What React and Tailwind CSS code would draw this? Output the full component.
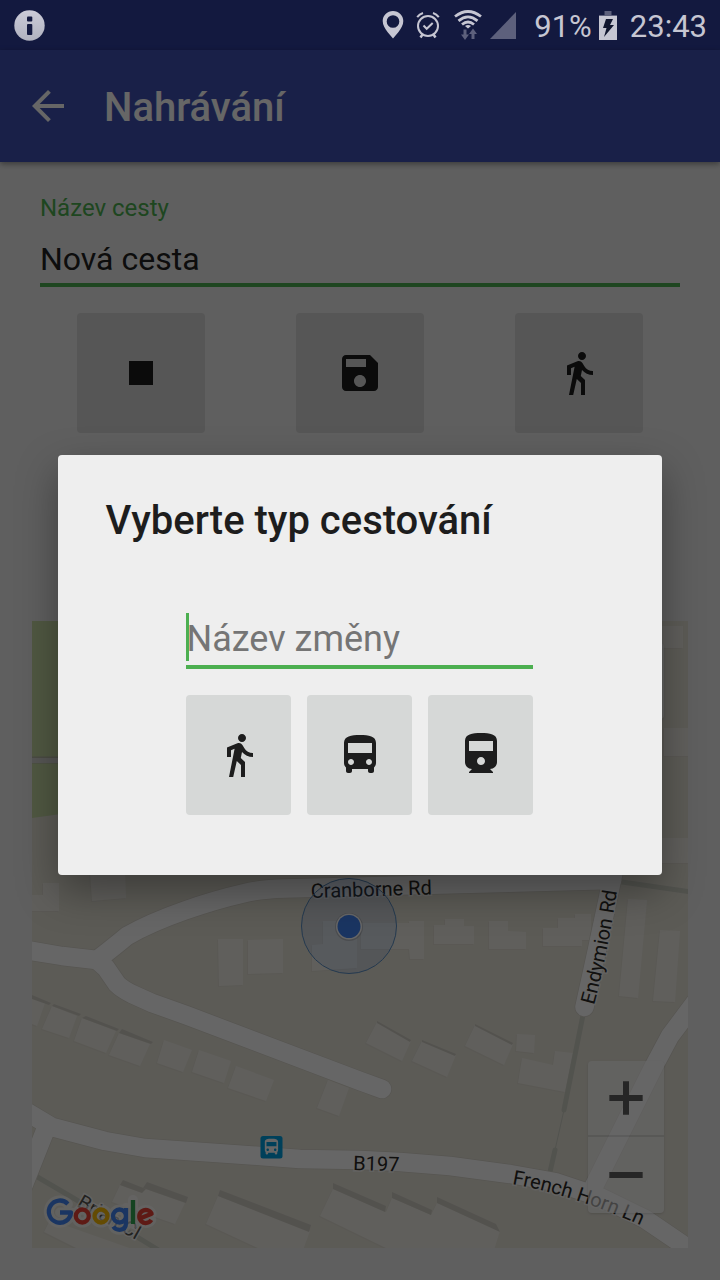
import React from "react";

const ICONS = {
  stop: "M6 6h12v12H6z",
  save: "M17 3H5c-1.11 0-2 .9-2 2v14c0 1.1.89 2 2 2h14c1.1 0 2-.9 2-2V7l-4-4zm-5 16c-1.66 0-3-1.34-3-3s1.34-3 3-3 3 1.34 3 3-1.34 3-3 3zm3-10H5V5h10v4z",
  walk: "M13.5 5.5c1.1 0 2-.9 2-2s-.9-2-2-2-2 .9-2 2 .9 2 2 2zM9.8 8.9L7 23h2.1l1.8-8 2.1 2v6h2v-7.5l-2.1-2 .6-3C14.8 12 16.8 13 19 13v-2c-1.9 0-3.5-1-4.3-2.4l-1-1.6c-.4-.6-1-1-1.7-1-.3 0-.5.1-.8.1L6 8.3V13h2V9.6l1.8-.7",
  bus: "M4 16c0 .88.39 1.67 1 2.22V20c0 .55.45 1 1 1h1c.55 0 1-.45 1-1v-1h8v1c0 .55.45 1 1 1h1c.55 0 1-.45 1-1v-1.78c.61-.55 1-1.34 1-2.22V6c0-3.5-3.58-4-8-4s-8 .5-8 4v10zm3.5 1c-.83 0-1.5-.67-1.5-1.5S6.67 14 7.5 14s1.5.67 1.5 1.5S8.33 17 7.5 17zm9 0c-.83 0-1.5-.67-1.5-1.5s.67-1.5 1.5-1.5 1.5.67 1.5 1.5-.67 1.5-1.5 1.5zm1.5-6H6V6h12v5z",
  train: "M4 15.5C4 17.43 5.57 19 7.5 19L6 20.5v.5h12v-.5L16.5 19c1.93 0 3.5-1.57 3.5-3.5V5c0-3.5-3.58-4-8-4s-8 .5-8 4v10.5zm8 1.5c-1.1 0-2-.9-2-2s.9-2 2-2 2 .9 2 2-.9 2-2 2zm6-7H6V5h12v5z",
  back: "M20 11H7.83l5.59-5.59L12 4l-8 8 8 8 1.41-1.41L7.83 13H20v-2z",
  plus: "M10.2 2h3.6v8.2H22v3.6h-8.200V22h-3.600v-8.200H2v-3.600h8.200z",
  minus: "M2 10.200h20v3.600H2z",
  locate: "M12 8a4 4 0 100 8 4 4 0 000-8zm9 3a9 9 0 00-8-8V1h-2v2a9 9 0 00-8 8H1v2h2a9 9 0 008 8v2h2v-2a9 9 0 008-8h2v-2h-2z",
};

function Icon({ name, className }) {
  return (
    <svg viewBox="0 0 24 24" className={className} fill="currentColor" aria-hidden="true">
      <path d={ICONS[name]} />
    </svg>
  );
}

function StatusBar() {
  return (
    <div className="relative z-20 flex h-[50px] items-center justify-between pl-[14px] pr-[13px] text-[#c6c6d2]">
      <svg viewBox="0 0 31 31" className="h-[31px] w-[31px]" aria-hidden="true">
        <defs>
          <linearGradient id="info" x1="0" y1="0" x2="0" y2="1">
            <stop offset="0" stopColor="#cbcbd8" />
            <stop offset="1" stopColor="#b0b2bf" />
          </linearGradient>
        </defs>
        <circle cx="15.500" cy="15.500" r="15.200" fill="url(#info)" />
        <rect x="13" y="6.500" width="5.300" height="5" rx="1" fill="#131940" />
        <rect x="13" y="14" width="5.300" height="11" rx="1" fill="#131940" />
      </svg>
      <div className="flex items-center">
        <svg viewBox="0 0 22 28" className="h-7 w-[22px]" fill="currentColor" aria-hidden="true">
          <path
            fillRule="evenodd"
            d="M11 0C5.200 0 .700 4.500 .700 10c0 4 2.300 7.500 5 11.200L11 27.500l5.300-6.300c2.700-3.700 5-7.200 5-11.200C21.300 4.500 16.800 0 11 0zm0 4.200a6.300 6.300 0 110 12.600 6.300 6.300 0 010-12.600z"
          />
        </svg>
        <svg viewBox="0 0 24 28" className="ml-3 h-7 w-6" fill="none" stroke="currentColor" strokeWidth="2" aria-hidden="true">
          <circle cx="12" cy="15" r="10" />
          <path d="M7.500 14.500l3.200 3.300 6-5.800" />
          <path d="M1.200 6.200Q3.500 3 7 2M22.800 6.200Q20.500 3 17 2" />
          <path d="M6.500 23.500l-2 3M17.500 23.500l2 3" strokeWidth="2.500" />
        </svg>
        <svg viewBox="0 0 28 30" className="ml-[14px] h-[30px] w-7" fill="none" stroke="currentColor" strokeWidth="2.800" aria-hidden="true">
          <path d="M1 6.500Q14-3.500 27 6.500" />
          <path d="M4.500 10.800Q14 3 23.500 10.800" />
          <path d="M8 14.500Q14 9.500 20 14.500" />
          <path d="M14 18.500l-3-2.500q3-2 6 0z" fill="currentColor" stroke="none" />
          <path d="M9.500 19.500h3v5h2.500L11 30l-4-5.500h2.500zM17.500 29h3v-5H23l-4-5.500-4 5.500h2.500z" fill="#5d607c" stroke="none" />
        </svg>
        <svg viewBox="0 0 26 27" className="ml-2 h-[27px] w-[26px]" fill="#5d607c" aria-hidden="true">
          <path d="M26 0v27H0z" />
        </svg>
        <span className="ml-[18px] pt-[3px] text-[31px] leading-[47px]">91%</span>
        <svg viewBox="0 0 18 29" className="ml-[7px] h-[29px] w-[18px]" aria-hidden="true">
          <path d="M5.500 0h7v4H18v2H0V4h5.500z" fill="#5d607c" />
          <path d="M0 5h18v24H0z" fill="#c6c6d2" />
          <path d="M7 8h7l-3 6h4L5 26l2.500-9H4z" fill="#11162f" />
        </svg>
        <span className="ml-[13px] pt-[3px] text-[31px] leading-[47px]">23:43</span>
      </div>
    </div>
  );
}

const BUILDINGS = [
  "660,626 683,626 683,648 660,648",
  "664,728 690,728 690,756 664,756",
  "660,838 690,838 690,863 660,863",
  "43,883 59,883 59,911 32,911 32,895 43,895",
  "90,872 125,872 126,898 92,901",
  "218,939 243,939 243,985 219,986",
  "248,940 283,939 283,973 248,974",
  "323,921 357,921 357,968 312,971 312,945 323,944",
  "361,923 409,923 409,921 424,921 424,959 410,959 409,949 361,949",
  "434,925 445,925 445,919 464,919 464,926 474,926 474,944 434,944",
  "489,921 508,921 508,931 526,932 526,949 489,949",
  "543,928 558,928 558,918 575,918 575,914 591,914 591,940 582,940 582,946 543,946",
  "628,899 647,900 638,998 619,996",
  "660,930 680,931 675,1002 653,1001",
  "517,1034 535,1035 534,1053 516,1051",
  "522,1058 553,1065 555,1051 573,1053 565,1092 518,1083",
  "475,1025 513,1044 504,1065 465,1046",
  "377,1022 411,1041 402,1061 366,1043",
  "422,1041 456,1055 447,1077 412,1061",
  "32,998 45,1003 37,1026 32,1024",
  "52,1006 77,1016 69,1038 42,1029",
  "82,1018 116,1031 106,1053 74,1041",
  "119,1033 150,1044 140,1066 109,1055",
  "164,1040 192,1050 183,1072 157,1063",
  "199,1050 231,1061 224,1083 192,1072",
  "236,1066 274,1080 266,1101 228,1088",
  "328,1080 349,1088 339,1116 317,1108",
  "120,1185 142,1193 143,1188 185,1203 175,1224 112,1202",
  "218,1196 310,1231 303,1250 262,1250 206,1224",
  "50,1220 135,1250 80,1250 44,1232",
  "333,1189 386,1212 392,1198 431,1215 437,1203 500,1231 494,1250 390,1250 320,1216",
];

const ROOF_SHADES = [
  "32,995 51,1003 49,1005 32,999",
  "54,1004 81,1014 79,1016 52,1006",
  "86,1016 119,1029 117,1031 82,1018",
  "122,1029 153,1042 151,1044 119,1033",
  "377,1021 411,1040 410,1042 377,1023",
  "422,1040 456,1054 455,1056 422,1042",
  "475,1024 513,1043 512,1045 475,1026",
  "123,1180 146,1189 142,1193 120,1185",
  "147,1182 188,1197 186,1203 143,1188",
  "220,1190 311,1225 309,1232 218,1196",
  "333,1183 386,1206 385,1212 333,1189",
  "392,1192 432,1210 431,1215 392,1198",
  "437,1197 496,1224 500,1232 437,1203",
];

const ROADS = [
  "M20 949L62 956 97 960Q115 946 127 936C160 917 210 901 245 893Q262 889 285 888.500L500 883 612 880",
  "M97 960L106 968 117 984Q122 989 132 994L152 1003 187 1015.500 360 1081 382 1089",
  "M20 1108L52 1127 105 1141 145 1148 260 1156 300 1159 360 1160 400 1162 450 1166 510 1174 555 1182 600 1197 645 1219 695 1253",
  "M45 1131L22 1189",
  "M594 1186L654 1066 670 1036 700 996",
  "M584.500 1007L597 950 614 870",
];

const FOOTPATHS = [
  "M583 1015L564 1110",
  "M555 1150L550 1172",
  "M622 882L692 892",
  "M34 1175L75 1199 160 1251",
];

const MARK_STROKES = [
  ["#4285f4", "M67.900 1203.900A11.100 11.100 0 1 0 71 1212.500H60"],
  ["#ea4335", "M88.800 1216A6.500 6.500 0 1 1 75.800 1216A6.500 6.500 0 1 1 88.800 1216"],
  ["#fbbc05", "M107.500 1216A6.500 6.500 0 1 1 94.500 1216A6.500 6.500 0 1 1 107.500 1216"],
  ["#4285f4", "M126 1208V1222.500Q126 1229.800 119.600 1229.800Q115.300 1229.800 113.400 1226.500M126 1216A6.500 6.500 0 1 1 113 1216A6.500 6.500 0 1 1 126 1216"],
  ["#34a853", "M133 1200V1224"],
  ["#ea4335", "M139.800 1218.500L151.600 1213.700A6.500 6.500 0 1 0 151.300 1219.900"],
];

function GoogleMark() {
  return (
    <g fill="none" strokeLinejoin="round">
      <g stroke="#fff" strokeOpacity="0.6" strokeLinecap="round">
        <path strokeWidth="10" d={MARK_STROKES.map(([, d]) => d).join("")} />
      </g>
      {MARK_STROKES.map(([color, d]) => (
        <path key={d} d={d} stroke={color} strokeWidth="4.300" />
      ))}
    </g>
  );
}

function MapDrawing() {
  return (
    <svg viewBox="32 621 656 627" preserveAspectRatio="xMidYMid slice" className="absolute inset-0 h-full w-full" role="img" aria-label="Google">
      <rect x="32" y="621" width="656" height="627" fill="#e6e3d8" />
      <path d="M32 621H200V795L32 818z" fill="#c8dba6" />
      <path d="M32 760H200" stroke="#b9bba9" strokeWidth="7" />
      <path d="M32 760.500H200" stroke="#d8d6d2" strokeWidth="5" />
      <g fill="#e0ddd2">
        {BUILDINGS.map((p) => (
          <polygon key={p} points={p} transform="translate(-1 1)" />
        ))}
      </g>
      <g fill="#f0eee6">
        {BUILDINGS.map((p) => (
          <polygon key={p} points={p} />
        ))}
      </g>
      <g fill="#d0cdc4">
        {ROOF_SHADES.map((p) => (
          <polygon key={p} points={p} />
        ))}
      </g>
      <g fill="none" stroke="#cdcfc4" strokeWidth="5" strokeLinecap="round">
        {FOOTPATHS.map((d) => (
          <path key={d} d={d} />
        ))}
        <path d="M564 1110L555 1150" strokeWidth="1" />
      </g>
      <g fill="none" stroke="#d8d5cb" strokeWidth="20" strokeLinecap="round" strokeLinejoin="round">
        {ROADS.map((d) => (
          <path key={d} d={d} />
        ))}
      </g>
      <g fill="none" stroke="#fff" strokeWidth="18.500" strokeLinecap="round" strokeLinejoin="round">
        {ROADS.map((d) => (
          <path key={d} d={d} />
        ))}
      </g>
      <defs>
        <path id="rd-cranborne" d="M311 898L445 894" />
        <path id="rd-endymion" d="M594 1005Q609 950 620 870" />
        <path id="rd-b197" d="M353 1170L420 1172" />
        <path id="rd-french" d="M512 1184Q580 1196 655 1232" />
        <path id="rd-brian" d="M76 1206L150 1248" />
      </defs>
      <g fontFamily="Roboto, sans-serif" fontSize="20" fill="#2b2a26" stroke="#fff" strokeWidth="3" strokeOpacity="0.7" paintOrder="stroke">
        <text><textPath href="#rd-cranborne">Cranborne Rd</textPath></text>
        <text><textPath href="#rd-endymion">Endymion Rd</textPath></text>
        <text><textPath href="#rd-b197">B197</textPath></text>
        <text><textPath href="#rd-french">French Horn Ln</textPath></text>
        <text fillOpacity="0.8"><textPath href="#rd-brian">Brian Cl</textPath></text>
      </g>
      <circle cx="349" cy="926" r="47.500" fill="#4285f4" fillOpacity="0.13" stroke="#5a8fc4" strokeWidth="1" />
      <circle cx="349" cy="927" r="14" fill="#000" fillOpacity="0.15" />
      <circle cx="349" cy="926.500" r="13" fill="#fff" />
      <circle cx="349" cy="926.500" r="11.500" fill="#4285f4" />
      <rect x="260.500" y="1136" width="22" height="22.500" rx="2.500" fill="#00a0e0" />
      <g transform="translate(261.500 1137) scale(0.83)">
        <path fill="#fff" d={ICONS.bus} />
      </g>
      <GoogleMark />
    </svg>
  );
}

function MapControl({ label, icon, size }) {
  return (
    <button type="button" aria-label={label} className="flex h-[76px] w-[76px] items-center justify-center text-[#606060]">
      <Icon name={icon} className={size} />
    </button>
  );
}

function TripButton({ label, icon }) {
  return (
    <button type="button" aria-label={label} className="flex h-[120px] w-32 items-center justify-center rounded bg-[#d6d7d7] text-[#1d1d1d]">
      <Icon name={icon} className="h-12 w-12" />
    </button>
  );
}

function TravelDialog() {
  const kinds = [
    ["Pěšky", "walk"],
    ["Autobus", "bus"],
    ["Vlak", "train"],
  ];
  return (
    <div className="absolute inset-0 z-10 flex items-center justify-center bg-black/60 pt-[50px]">
      <div
        role="dialog"
        aria-modal="true"
        aria-labelledby="dialog-title"
        className="w-[84%] rounded bg-[#eeeeee] px-12 pb-[60px] pt-10 shadow-[0_16px_40px_rgba(0,0,0,0.35)]"
      >
        <h2 id="dialog-title" className="text-[40px] font-medium leading-[52px] text-[#1d1d1d]">
          Vyberte typ cestování
        </h2>
        <div className="mx-auto mt-[66px] max-w-[347px]">
          <div className="flex items-start border-b-4 border-[#4caf50] pb-1">
            <span className="h-12 w-[3px] shrink-0 bg-[#4caf50]" />
            <input
              type="text"
              aria-label="Název změny"
              placeholder="Název změny"
              className="-ml-[3px] h-12 w-full min-w-0 bg-transparent pt-1 text-[36px] outline-none placeholder:text-[#757575]"
            />
          </div>
          <div className="mt-[26px] grid grid-cols-3 gap-4">
            {kinds.map(([label, icon]) => (
              <button
                key={icon}
                type="button"
                aria-label={label}
                className="flex h-[120px] items-center justify-center rounded bg-[#d6d8d7] text-[#1d1d1d]"
              >
                <Icon name={icon} className="h-12 w-12" />
              </button>
            ))}
          </div>
        </div>
      </div>
    </div>
  );
}

export default function App() {
  return (
    <div className="relative flex min-h-screen flex-col bg-[#eeeeee] font-[Roboto,sans-serif]">
      <div className="absolute inset-x-0 top-0 h-[50px] bg-[#303f9f]" />
      <StatusBar />
      <header className="relative flex h-28 items-center bg-[#3f51b5] pl-6 text-white shadow-[0_2px_6px_rgba(0,0,0,0.4)]">
        <button type="button" aria-label="Zpět" className="h-12 w-12">
          <Icon name="back" className="h-12 w-12" />
        </button>
        <h1 className="ml-8 pt-1 text-[40px] font-medium leading-[48px]">Nahrávání</h1>
      </header>
      <main className="flex flex-1 flex-col px-8 pb-8 pt-8">
        <div className="flex flex-col px-2">
          <label htmlFor="trip-name" className="text-2xl leading-7 text-[#4caf50]">
            Název cesty
          </label>
          <input
            id="trip-name"
            type="text"
            defaultValue="Nová cesta"
            className="mt-3 h-[53px] w-full border-b-4 border-[#4caf50] bg-transparent text-[32px] text-[#212121] outline-none"
          />
        </div>
        <div className="mt-[26px] grid grid-cols-3 justify-items-center">
          <TripButton label="Zastavit" icon="stop" />
          <TripButton label="Uložit" icon="save" />
          <TripButton label="Změnit typ cestování" icon="walk" />
        </div>
        <section aria-label="Mapa" className="relative mt-[188px] min-h-[400px] flex-1 overflow-hidden">
          <MapDrawing />
          <div className="absolute right-6 top-[22px] rounded bg-white/70 shadow">
            <MapControl label="Moje poloha" icon="locate" size="h-10 w-10" />
          </div>
          <div className="absolute bottom-[35px] right-6 divide-y-2 divide-black/10 rounded bg-white/60 shadow">
            <MapControl label="Přiblížit" icon="plus" size="h-10 w-10" />
            <MapControl label="Oddálit" icon="minus" size="h-10 w-10" />
          </div>
        </section>
      </main>
      <TravelDialog />
    </div>
  );
}
